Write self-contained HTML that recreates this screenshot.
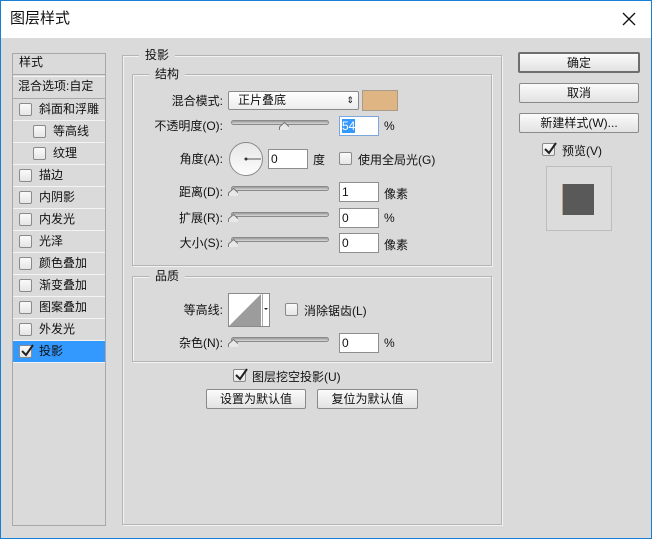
<!DOCTYPE html>
<html><head><meta charset="utf-8"><style>
*{margin:0;padding:0;box-sizing:border-box}
body{width:652px;height:539px;overflow:hidden;background:#dadada;font-family:"Liberation Sans","Noto Sans CJK SC","WenQuanYi Zen Hei",sans-serif;font-size:12px;color:#111;position:relative}
.a{position:absolute}
#win{position:absolute;left:0;top:0;width:652px;height:539px;border:1px solid #1a7fd4;border-top:1px solid #1a7fd4}
#title{position:absolute;left:1px;top:1px;width:650px;height:37px;background:#fff}
.lbl{position:absolute;text-align:right;white-space:nowrap;line-height:14px}
.fs{position:absolute;border:1px solid #b4b4b4;box-shadow:inset 1px 1px 0 #f2f2f2,1px 1px 0 #f2f2f2}
.leg{position:absolute;background:#dadada;padding:0 6px;line-height:14px;font-size:12px}
.inp{position:absolute;background:#fff;border:1px solid #8e8e8e;height:20px;width:40px;line-height:18px;padding-left:2px}
.trk{position:absolute;height:5px;width:98px;border-radius:3px;background:linear-gradient(#9a9a9a,#d8d8d8);border:1px solid #8a8a8a}
.th{position:absolute;width:10px;height:8px}
.cb{position:absolute;width:13px;height:13px;border:1px solid #8a8a8a;background:linear-gradient(#fafafa,#e6e6e6);border-radius:2px}
.btn{position:absolute;border:1px solid #8a8a8a;border-radius:2px;background:linear-gradient(#fbfbfb,#e2e2e2);text-align:center;line-height:18px;height:20px}
.row{position:absolute;left:13px;width:92px;height:22px;border-bottom:1px solid #f4f4f4;line-height:21px}
.row .cb{top:4px}
</style></head><body>
<div id="title"></div>
<div class="a" style="left:10px;top:10px;font-size:15px;line-height:18px">图层样式</div>
<svg class="a" style="left:621px;top:11px" width="16" height="16"><path d="M2 2L14 14M14 2L2 14" stroke="#111" stroke-width="1.3"/></svg>
<div id="win"></div>

<!-- left list -->
<div class="a" style="left:12px;top:53px;width:94px;height:473px;border:1px solid #a8a8a8"></div>
<div class="a" style="left:19px;top:54px;line-height:16px">样式</div>
<div class="a" style="left:13px;top:74px;width:92px;height:3px;border-top:1px solid #a8a8a8;border-bottom:1px solid #f4f4f4"></div>
<div class="a" style="left:18px;top:78px;line-height:16px">混合选项:自定</div>
<div class="a" style="left:13px;top:98px;width:92px;border-top:1px solid #a8a8a8"></div>
<div class="row" style="top:99px"><div class="cb" style="left:6px"></div><span class="a" style="left:26px">斜面和浮雕</span></div>
<div class="row" style="top:121px"><div class="cb" style="left:20px"></div><span class="a" style="left:40px">等高线</span></div>
<div class="row" style="top:143px"><div class="cb" style="left:20px"></div><span class="a" style="left:40px">纹理</span></div>
<div class="row" style="top:165px"><div class="cb" style="left:6px"></div><span class="a" style="left:26px">描边</span></div>
<div class="row" style="top:187px"><div class="cb" style="left:6px"></div><span class="a" style="left:26px">内阴影</span></div>
<div class="row" style="top:209px"><div class="cb" style="left:6px"></div><span class="a" style="left:26px">内发光</span></div>
<div class="row" style="top:231px"><div class="cb" style="left:6px"></div><span class="a" style="left:26px">光泽</span></div>
<div class="row" style="top:253px"><div class="cb" style="left:6px"></div><span class="a" style="left:26px">颜色叠加</span></div>
<div class="row" style="top:275px"><div class="cb" style="left:6px"></div><span class="a" style="left:26px">渐变叠加</span></div>
<div class="row" style="top:297px"><div class="cb" style="left:6px"></div><span class="a" style="left:26px">图案叠加</span></div>
<div class="row" style="top:319px"><div class="cb" style="left:6px"></div><span class="a" style="left:26px">外发光</span></div>
<div class="row" style="top:341px;background:#3399ff;height:22px"><div class="cb" style="left:6px"></div><svg class="a" style="left:7px;top:3px" width="14" height="14"><path d="M2 7L6 11L13 1" stroke="#222" stroke-width="2" fill="none"/></svg><span class="a" style="left:26px">投影</span></div>

<!-- main groups -->
<div class="fs" style="left:122px;top:55px;width:380px;height:470px"></div>
<div class="leg" style="left:139px;top:48px">投影</div>
<div class="fs" style="left:132px;top:74px;width:360px;height:192px"></div>
<div class="leg" style="left:149px;top:67px">结构</div>

<div class="lbl" style="right:429px;top:94px">混合模式:</div>
<div class="btn" style="left:228px;top:91px;width:131px;height:19px;text-align:left;padding-left:9px;line-height:17px;background:linear-gradient(#fff,#ececec)">正片叠底<span class="a" style="right:4px;top:0;font-size:9px">⇕</span></div>
<div class="a" style="left:362px;top:90px;width:36px;height:21px;background:#e0b584;border:1px solid #a89a8c"></div>

<div class="lbl" style="right:429px;top:119px">不透明度(O):</div>
<div class="trk" style="left:231px;top:120px"></div>
<svg class="th" style="left:279px;top:122px" width="11" height="9"><path d="M0.5 8.5V5L5.5 0.5L10.5 5V8.5Z" fill="#e8e8e8" stroke="#777"/></svg>
<div class="inp" style="left:339px;top:116px;border-color:#7aa7e0"><span style="background:#3399ff;color:#fff">54</span></div>
<div class="a" style="left:384px;top:119px">%</div>

<div class="lbl" style="right:429px;top:152px">角度(A):</div>
<svg class="a" style="left:228px;top:141px" width="36" height="36"><defs><linearGradient id="g" x1="0" y1="0" x2="0" y2="1"><stop offset="0" stop-color="#e6e6e6"/><stop offset="1" stop-color="#fdfdfd"/></linearGradient></defs><circle cx="18" cy="18" r="16.5" fill="url(#g)" stroke="#8a8a8a"/><line x1="18" y1="18" x2="33" y2="18" stroke="#555"/><circle cx="18" cy="18" r="1.5" fill="#333"/></svg>
<div class="inp" style="left:268px;top:149px">0</div>
<div class="a" style="left:313px;top:151px">度</div>
<div class="cb" style="left:339px;top:152px"></div>
<div class="a" style="left:358px;top:151px">使用全局光(G)</div>

<div class="lbl" style="right:429px;top:185px">距离(D):</div>
<div class="trk" style="left:231px;top:186px"></div>
<svg class="th" style="left:228px;top:188px" width="11" height="9"><path d="M0.5 8.5V5L5.5 0.5L10.5 5V8.5Z" fill="#e8e8e8" stroke="#777"/></svg>
<div class="inp" style="left:339px;top:182px">1</div>
<div class="a" style="left:384px;top:185px">像素</div>

<div class="lbl" style="right:429px;top:211px">扩展(R):</div>
<div class="trk" style="left:231px;top:212px"></div>
<svg class="th" style="left:228px;top:214px" width="11" height="9"><path d="M0.5 8.5V5L5.5 0.5L10.5 5V8.5Z" fill="#e8e8e8" stroke="#777"/></svg>
<div class="inp" style="left:339px;top:208px">0</div>
<div class="a" style="left:384px;top:211px">%</div>

<div class="lbl" style="right:429px;top:236px">大小(S):</div>
<div class="trk" style="left:231px;top:237px"></div>
<svg class="th" style="left:228px;top:239px" width="11" height="9"><path d="M0.5 8.5V5L5.5 0.5L10.5 5V8.5Z" fill="#e8e8e8" stroke="#777"/></svg>
<div class="inp" style="left:339px;top:233px">0</div>
<div class="a" style="left:384px;top:236px">像素</div>

<div class="fs" style="left:132px;top:276px;width:360px;height:86px"></div>
<div class="leg" style="left:149px;top:269px">品质</div>
<div class="lbl" style="right:429px;top:303px">等高线:</div>
<svg class="a" style="left:228px;top:293px" width="42" height="34"><rect x="0.5" y="0.5" width="41" height="33" fill="#fff" stroke="#8a8a8a"/><path d="M1 33L33 1V33Z" fill="#9c9c9c"/><line x1="34.5" y1="1" x2="34.5" y2="33" stroke="#aaa"/><path d="M36 15h4l-2 2z" fill="#222"/></svg>
<div class="cb" style="left:285px;top:303px"></div>
<div class="a" style="left:304px;top:302px">消除锯齿(L)</div>
<div class="lbl" style="right:429px;top:336px">杂色(N):</div>
<div class="trk" style="left:231px;top:337px"></div>
<svg class="th" style="left:228px;top:339px" width="11" height="9"><path d="M0.5 8.5V5L5.5 0.5L10.5 5V8.5Z" fill="#e8e8e8" stroke="#777"/></svg>
<div class="inp" style="left:339px;top:333px">0</div>
<div class="a" style="left:384px;top:336px">%</div>

<div class="cb" style="left:233px;top:369px"></div>
<svg class="a" style="left:234px;top:368px" width="14" height="14"><path d="M2 7L6 11L13 1" stroke="#222" stroke-width="2" fill="none"/></svg>
<div class="a" style="left:252px;top:368px">图层挖空投影(U)</div>
<div class="btn" style="left:206px;top:389px;width:100px">设置为默认值</div>
<div class="btn" style="left:317px;top:389px;width:101px">复位为默认值</div>

<!-- right -->
<div class="btn" style="left:518px;top:52px;width:122px;height:21px;border:2px solid #6e6e6e">确定</div>
<div class="btn" style="left:519px;top:83px;width:120px">取消</div>
<div class="btn" style="left:519px;top:113px;width:120px">新建样式(W)...</div>
<div class="cb" style="left:542px;top:143px"></div>
<svg class="a" style="left:543px;top:142px" width="14" height="14"><path d="M2 7L6 11L13 1" stroke="#222" stroke-width="2" fill="none"/></svg>
<div class="a" style="left:562px;top:142px">预览(V)</div>
<div class="a" style="left:546px;top:166px;width:66px;height:65px;border:1px solid #bdbdbd;background:#dcdcdc"></div>
<div class="a" style="left:562px;top:184px;width:32px;height:31px;background:#595959;border-left:1px solid #c4a27e"></div>
</body></html>
